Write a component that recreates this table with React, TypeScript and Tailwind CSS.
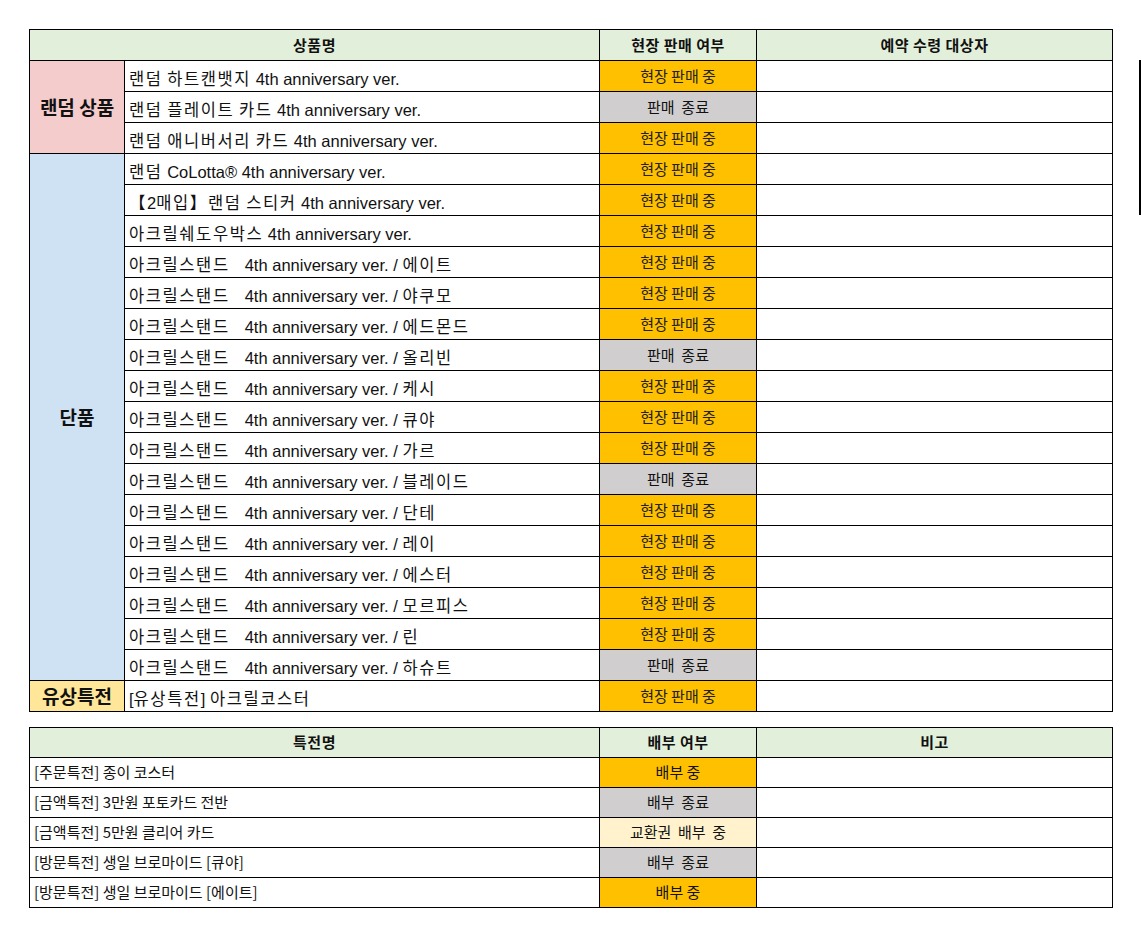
type Status = 'on' | 'off';

const body = '"Liberation Sans", "Noto Sans CJK KR", sans-serif';
const ko = '"Noto Sans CJK KR", "Liberation Sans", sans-serif';

const stand = (name: string, s: Status = 'on'): [string, Status] => [`아크릴스탠드\u30004th anniversary ver. / ${name}`, s];

const randomItems: [string, Status][] = [
  ['랜덤 하트캔뱃지 4th anniversary ver.', 'on'],
  ['랜덤 플레이트 카드 4th anniversary ver.', 'off'],
  ['랜덤 애니버서리 카드 4th anniversary ver.', 'on'],
];

const singleItems: [string, Status][] = [
  ['랜덤 CoLotta® 4th anniversary ver.', 'on'],
  ['【2매입】랜덤 스티커 4th anniversary ver.', 'on'],
  ['아크릴쉐도우박스 4th anniversary ver.', 'on'],
  stand('에이트'),
  stand('야쿠모'),
  stand('에드몬드'),
  stand('올리빈', 'off'),
  stand('케시'),
  stand('큐야'),
  stand('가르'),
  stand('블레이드', 'off'),
  stand('단테'),
  stand('레이'),
  stand('에스터'),
  stand('모르피스'),
  stand('린'),
  stand('하슈트', 'off'),
];

const perks: [string, string, string][] = [
  ['[주문특전] 종이 코스터', '배부 중', 'bg-[#ffc000]'],
  ['[금액특전] 3만원 포토카드 전반', '배부  종료', 'bg-[#d0cece]'],
  ['[금액특전] 5만원 클리어 카드', '교환권  배부  중', 'bg-[#fff2cc]'],
  ['[방문특전] 생일 브로마이드 [큐야]', '배부  종료', 'bg-[#d0cece]'],
  ['[방문특전] 생일 브로마이드 [에이트]', '배부 중', 'bg-[#ffc000]'],
];

const cell = 'border border-black';

// hangul runs get a little extra tracking so they sit as wide as the sheet's font
const Spaced = ({ text }: { text: string }) => (
  <>
    {text.split(/(\u3000|[\uAC00-\uD7A3【】]+)/).map((part, i) => {
      if (part === '\u3000') return <span key={i} className="inline-block w-[15px]" />;
      if (/[\uAC00-\uD7A3【】]/.test(part)) return <span key={i} className="tracking-[1.6px]">{part}</span>;
      return <span key={i}>{part}</span>;
    })}
  </>
);

const StatusCell = ({ s }: { s: Status }) =>
  s === 'on' ? (
    <td className={`${cell} bg-[#ffc000] text-center text-[15px] text-[#222]`} style={{ fontFamily: ko }}>
      현장 판매 중
    </td>
  ) : (
    <td className={`${cell} bg-[#d0cece] text-center text-[15px] text-[#111] whitespace-pre`} style={{ fontFamily: ko }}>
      {'판매  종료'}
    </td>
  );

const NameCell = ({ text }: { text: string }) => (
  <td className={`${cell} pl-[4px] pt-[6px] text-[16.5px] leading-[20px] text-[#111] whitespace-pre overflow-hidden`} style={{ fontFamily: body }}>
    <Spaced text={text} />
  </td>
);

export default function App() {
  return (
    <div className="relative min-h-[936px] w-[1141px] bg-white pt-[29px] pl-[29px]">
      <table className="table-fixed border-collapse w-[1083px]">
        <colgroup>
          <col className="w-[95px]" />
          <col className="w-[475px]" />
          <col className="w-[157px]" />
          <col className="w-[356px]" />
        </colgroup>
        <thead>
          <tr className="h-[31px] bg-[#e2efda] text-[15px] font-bold tracking-[0.5px] text-[#111]" style={{ fontFamily: ko }}>
            <th colSpan={2} className={cell}>상품명</th>
            <th className={cell}>현장 판매 여부</th>
            <th className={cell}>예약 수령 대상자</th>
          </tr>
        </thead>
        <tbody>
          {randomItems.map(([text, s], i) => (
            <tr key={text} className="h-[31px]">
              {i === 0 && (
                <td rowSpan={3} className={`${cell} bg-[#f4cccc] text-center text-[19px] font-bold text-[#111]`} style={{ fontFamily: ko }}>
                  랜덤 상품
                </td>
              )}
              <NameCell text={text} />
              <StatusCell s={s} />
              <td className={cell} />
            </tr>
          ))}
          {singleItems.map(([text, s], i) => (
            <tr key={text} className="h-[31px]">
              {i === 0 && (
                <td rowSpan={17} className={`${cell} bg-[#cfe2f3] text-center text-[19px] font-bold text-[#111]`} style={{ fontFamily: ko }}>
                  단품
                </td>
              )}
              <NameCell text={text} />
              <StatusCell s={s} />
              <td className={cell} />
            </tr>
          ))}
          <tr className="h-[31px]">
            <td className={`${cell} bg-[#ffe699] text-center text-[19px] font-bold text-[#111]`} style={{ fontFamily: ko }}>
              유상특전
            </td>
            <NameCell text="[유상특전] 아크릴코스터" />
            <StatusCell s="on" />
            <td className={cell} />
          </tr>
        </tbody>
      </table>

      <table className="mt-[15px] table-fixed border-collapse w-[1083px]">
        <colgroup>
          <col className="w-[570px]" />
          <col className="w-[157px]" />
          <col className="w-[356px]" />
        </colgroup>
        <thead>
          <tr className="h-[30px] bg-[#e2efda] text-[15px] font-bold tracking-[0.5px] text-[#111]" style={{ fontFamily: ko }}>
            <th className={cell}>특전명</th>
            <th className={cell}>배부 여부</th>
            <th className={cell}>비고</th>
          </tr>
        </thead>
        <tbody>
          {perks.map(([name, st, bg]) => (
            <tr key={name} className="h-[30px] text-[15px] text-[#111]" style={{ fontFamily: ko }}>
              <td className={`${cell} pl-[4px]`}>{name}</td>
              <td className={`${cell} ${bg} text-center whitespace-pre`}>{st}</td>
              <td className={cell} />
            </tr>
          ))}
        </tbody>
      </table>

      <div className="absolute left-[1139px] top-[60px] h-[155px] w-[1.5px] bg-black" />
    </div>
  );
}
